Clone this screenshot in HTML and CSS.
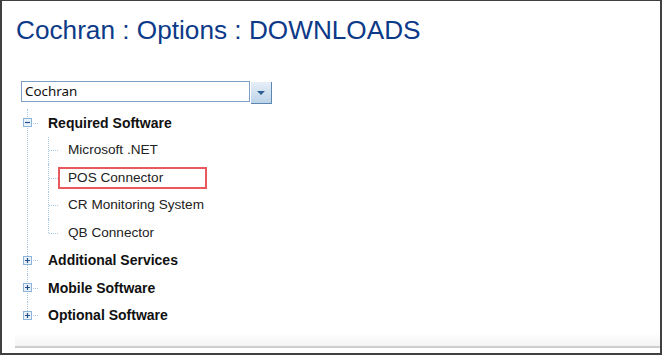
FILE: index.html
```html
<!DOCTYPE html>
<html>
    <head>
        <title>Cochran : Options : DOWNLOADS</title>
        <link rel="stylesheet" href="styles.css">
    </head>
    <body>
        <div class="frame">
            <h1 class="page-title">Cochran : Options : DOWNLOADS</h1>

            <div class="combo">
                <div class="combo-input">Cochran</div>
                <div class="combo-button">
                    <svg width="10" height="6" viewBox="0 0 10 6"><path d="M1 1 L9 1 L5 5 Z" fill="#2c5d94"/></svg>
                </div>
            </div>

            <ul class="tree">
                <li class="node">
                    <div class="row">
                        <span class="toggle">
                            <svg width="9" height="9" viewBox="0 0 9 9">
                                <rect x="0.5" y="0.5" width="8" height="8" fill="#eaf2fa" stroke="#8db4d8"/>
                                <path d="M2 4.5 H7" stroke="#24508c" stroke-width="1.2"/>
                            </svg>
                        </span>
                        <span class="label parent">Required Software</span>
                    </div>
                    <ul class="children">
                        <li class="leaf"><span class="label">Microsoft .NET</span></li>
                        <li class="leaf"><span class="label selected">POS Connector</span></li>
                        <li class="leaf"><span class="label">CR Monitoring System</span></li>
                        <li class="leaf"><span class="label">QB Connector</span></li>
                    </ul>
                </li>
                <li class="node">
                    <div class="row">
                        <span class="toggle">
                            <svg width="9" height="9" viewBox="0 0 9 9">
                                <rect x="0.5" y="0.5" width="8" height="8" fill="#eaf2fa" stroke="#8db4d8"/>
                                <path d="M2 4.5 H7 M4.5 2 V7" stroke="#24508c" stroke-width="1.2"/>
                            </svg>
                        </span>
                        <span class="label parent">Additional Services</span>
                    </div>
                </li>
                <li class="node">
                    <div class="row">
                        <span class="toggle">
                            <svg width="9" height="9" viewBox="0 0 9 9">
                                <rect x="0.5" y="0.5" width="8" height="8" fill="#eaf2fa" stroke="#8db4d8"/>
                                <path d="M2 4.5 H7 M4.5 2 V7" stroke="#24508c" stroke-width="1.2"/>
                            </svg>
                        </span>
                        <span class="label parent">Mobile Software</span>
                    </div>
                </li>
                <li class="node">
                    <div class="row">
                        <span class="toggle">
                            <svg width="9" height="9" viewBox="0 0 9 9">
                                <rect x="0.5" y="0.5" width="8" height="8" fill="#eaf2fa" stroke="#8db4d8"/>
                                <path d="M2 4.5 H7 M4.5 2 V7" stroke="#24508c" stroke-width="1.2"/>
                            </svg>
                        </span>
                        <span class="label parent">Optional Software</span>
                    </div>
                </li>
            </ul>

            <div class="footer-bar"></div>
        </div>
    </body>
</html>
```

FILE: styles.css
```css
:root {
    --row: 27.5px;
    --dots: #a9c8e4;
}
html, body {
    margin: 0;
    padding: 0;
    background: #ffffff;
}
.frame {
    width: 662px;
    height: 355px;
    box-sizing: border-box;
    border: 2px solid #404040;
    border-top-width: 1px;
    padding-left: 14px;
    display: flex;
    flex-direction: column;
    font-family: "Liberation Sans", Arial, sans-serif;
}
.page-title {
    margin: 14px 0 0 0;
    font-size: 26.2px;
    line-height: 30px;
    font-weight: normal;
    color: #0d3a88;
}
.combo {
    display: flex;
    margin: 36px 0 0 5px;
    height: 22px;
}
.combo-input {
    width: 229px;
    height: 21px;
    box-sizing: border-box;
    border: 1px solid #7f9fc4;
    padding-left: 3px;
    font-family: "Noto Sans", "Open Sans", sans-serif;
    font-size: 13.4px;
    line-height: 19px;
    color: #111;
}
.combo-button {
    width: 21px;
    height: 22px;
    margin-left: 1px;
    margin-top: 1px;
    box-sizing: border-box;
    border-right: 1px solid #5c87b2;
    border-bottom: 1px solid #5c87b2;
    background: linear-gradient(#e6eff8, #bdd3e8);
    display: flex;
    align-items: center;
    justify-content: center;
}
.tree, .children {
    list-style: none;
    margin: 0;
    padding: 0;
}
.tree {
    margin: 6px 0 0 5px;
    font-size: 13.6px;
    color: #1a1a1a;
}
.node {
    position: relative;
}
.node::before {
    content: "";
    position: absolute;
    left: 6px;
    top: 0;
    bottom: 0;
    border-left: 1px dotted var(--dots);
}
.node:last-child::before {
    bottom: auto;
    height: calc(var(--row) / 2);
}
.row {
    height: var(--row);
    display: flex;
    align-items: center;
    position: relative;
}
.row::after {
    content: "";
    position: absolute;
    left: 10px;
    width: 7px;
    top: 50%;
    border-top: 1px dotted var(--dots);
}
.toggle {
    width: 9px;
    height: 9px;
    margin-left: 2px;
    display: flex;
    position: relative;
    z-index: 1;
    background: #fff;
}
.label.parent {
    margin-left: 16px;
    font-size: 14px;
    font-weight: bold;
    color: #111;
}
.children {
    padding-left: 27px;
}
.leaf {
    position: relative;
    height: var(--row);
    display: flex;
    align-items: center;
    padding-left: 10px;
}
.leaf::before {
    content: "";
    position: absolute;
    left: 0;
    top: 0;
    bottom: 0;
    border-left: 1px dotted var(--dots);
}
.leaf:last-child::before {
    bottom: 50%;
}
.leaf::after {
    content: "";
    position: absolute;
    left: 1px;
    width: 9px;
    top: 50%;
    border-top: 1px dotted var(--dots);
}
.leaf .label {
    display: inline-block;
    height: 22px;
    line-height: 18px;
    box-sizing: border-box;
    border: 2px solid transparent;
    padding: 0 8px;
    color: #222;
}
.leaf .label.selected {
    width: 149px;
    border-color: #e8585c;
}
.footer-bar {
    margin-top: auto;
    margin-bottom: 5px;
    height: 13px;
    margin-left: -1px;
    background: linear-gradient(#ffffff, #f3f3f3);
    border-bottom: 2px solid #cdcdcd;
}
```
